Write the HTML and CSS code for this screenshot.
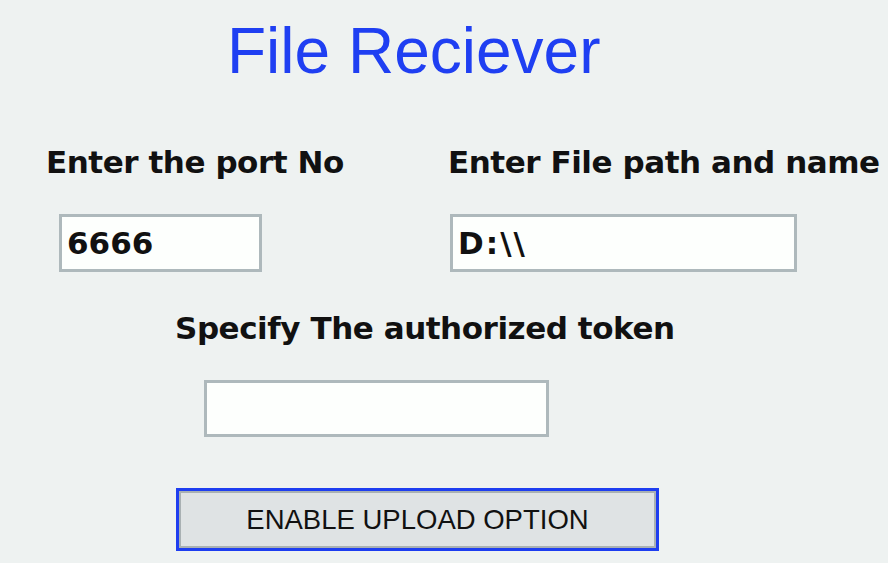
FILE: index.html
```html
<!DOCTYPE html>
<html>
<head>
<meta charset="utf-8">
<link rel="stylesheet" href="styles.css">
</head>
<body>
<div class="app">
  <h1 class="title">File Reciever</h1>
  <div class="fields">
    <div class="field">
      <label class="label">Enter the port No</label>
      <div class="input port">6666</div>
    </div>
    <div class="field">
      <label class="label">Enter File path and name</label>
      <div class="input path">D:\\</div>
    </div>
  </div>
  <div class="token">
    <label class="label">Specify The authorized token</label>
    <div class="input token-input"></div>
  </div>
  <div class="actions">
    <button class="btn">ENABLE UPLOAD OPTION</button>
  </div>
</div>
</body>
</html>
```
FILE: styles.css
```css
html, body {
  margin: 0;
  padding: 0;
  background: #eef2f1;
}
.app {
  width: 888px;
  height: 563px;
  box-sizing: border-box;
  padding-top: 19px;
  overflow: hidden;
}
.title {
  margin: 0 0 0 227px;
  font-family: "Liberation Sans", Arial, sans-serif;
  font-weight: normal;
  font-size: 64px;
  line-height: 64px;
  color: #1f3ff2;
}
.label {
  display: block;
  font-family: "DejaVu Sans", Verdana, sans-serif;
  font-weight: bold;
  font-size: 31px;
  line-height: 31px;
  letter-spacing: -0.45px;
  color: #111;
  white-space: nowrap;
}
.fields {
  display: grid;
  grid-template-columns: 402px auto;
  padding-left: 46px;
  margin-top: 64px;
}
.field {
  display: flex;
  flex-direction: column;
  align-items: flex-start;
}
.input {
  box-sizing: border-box;
  margin-top: 36px;
  height: 58px;
  border: 3px solid #aeb9bc;
  background: #fdfffd;
  font-family: "DejaVu Sans", Verdana, sans-serif;
  font-weight: bold;
  font-size: 31px;
  line-height: 52px;
  color: #111;
  padding-left: 5px;
}
.port {
  margin-left: 13px;
  width: 203px;
}
.path {
  margin-left: 2px;
  width: 347px;
  letter-spacing: 2px;
}
.token {
  display: flex;
  flex-direction: column;
  align-items: flex-start;
  padding-left: 175px;
  margin-top: 41px;
}
.token-input {
  margin-left: 29px;
  width: 345px;
  height: 57px;
}
.actions {
  padding-left: 176px;
  margin-top: 51px;
}
.btn {
  display: block;
  box-sizing: border-box;
  width: 483px;
  height: 63px;
  border: 3px solid #1e3ef0;
  box-shadow: inset 0 0 0 2px #a9b1b3;
  background: #dfe3e4;
  font-family: "Liberation Sans", Arial, sans-serif;
  font-size: 27.5px;
  color: #111;
  padding: 0;
}
```
